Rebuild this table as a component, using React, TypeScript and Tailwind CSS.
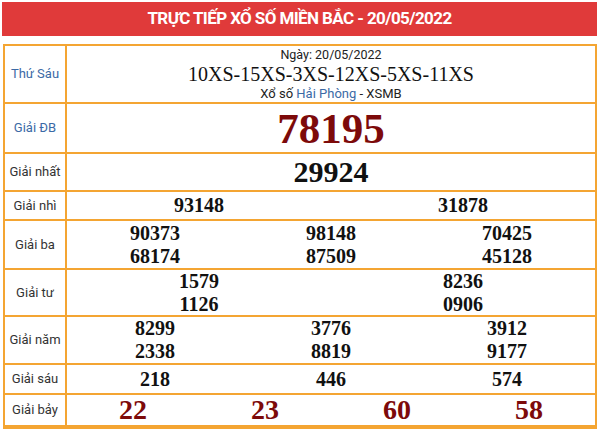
import React from 'react'

type Row = {
  label: string
  labelBlue?: boolean
  height: string
  cols: number
  values: string[][]
  size: string
  red?: boolean
}

const rows: Row[] = [
  { label: 'Giải ĐB', labelBlue: true, height: 'h-[50px]', cols: 1, values: [['78195']], size: 'text-[43px]', red: true },
  { label: 'Giải nhất', height: 'h-[38px]', cols: 1, values: [['29924']], size: 'text-[30px]' },
  { label: 'Giải nhì', height: 'h-[29px]', cols: 2, values: [['93148'], ['31878']], size: 'text-[20px]' },
  { label: 'Giải ba', height: 'h-[49px]', cols: 3, values: [['90373', '68174'], ['98148', '87509'], ['70425', '45128']], size: 'text-[20px]' },
  { label: 'Giải tư', height: 'h-[47px]', cols: 2, values: [['1579', '1126'], ['8236', '0906']], size: 'text-[20px]' },
  { label: 'Giải năm', height: 'h-[48px]', cols: 3, values: [['8299', '2338'], ['3776', '8819'], ['3912', '9177']], size: 'text-[20px]' },
  { label: 'Giải sáu', height: 'h-[30px]', cols: 3, values: [['218'], ['446'], ['574']], size: 'text-[20px]' },
  { label: 'Giải bảy', height: 'h-[32px]', cols: 4, values: [['22'], ['23'], ['60'], ['58']], size: 'text-[28px]', red: true },
]

const gridCols: Record<number, string> = {
  1: 'grid-cols-1',
  2: 'grid-cols-2',
  3: 'grid-cols-3',
  4: 'grid-cols-4',
}

const PrizeRow: React.FC<{ row: Row }> = ({ row }) => {
  return (
    <div className={`flex border-t-2 border-[#f4a532] ${row.height}`}>
      <div
        className={`w-[62px] shrink-0 border-r-2 border-[#f4a532] flex items-center justify-center text-[13px] ${row.labelBlue ? 'text-[#3b6aa6]' : 'text-[#333]'}`}
      >
        {row.label}
      </div>
      <div className={`flex-1 grid ${gridCols[row.cols]} items-center`}>
        {row.values.map((col, i) => (
          <div key={i} className="flex flex-col items-center justify-center">
            {col.map((v) => (
              <span
                key={v}
                className={`font-['Liberation_Serif',serif] font-bold ${row.size} ${row.cols > 1 && !row.red ? 'leading-[23px]' : 'leading-none'} ${row.red ? 'text-[#7d0a0a]' : 'text-[#111]'}`}
              >
                {v}
              </span>
            ))}
          </div>
        ))}
      </div>
    </div>
  )
}

export default function App() {
  return (
    <div className="w-[599px] h-[430px] bg-white px-[2px] pt-[2px] font-['Roboto',sans-serif] overflow-hidden">
      <div className="h-[34px] bg-[#e03a3a] flex items-center justify-center text-white font-bold text-[17px] tracking-[-0.6px]">
        TRỰC TIẾP XỔ SỐ MIỀN BẮC - 20/05/2022
      </div>

      <div className="mt-[8px] ml-[1px] w-[594px] border-2 border-t-0 border-[#f4a532]">
        <div className="flex border-t-2 border-[#f4a532] h-[58px]">
          <div className="w-[62px] shrink-0 border-r-2 border-[#f4a532] flex items-center justify-center text-[13px] text-[#3b6aa6]">
            Thứ Sáu
          </div>
          <div className="flex-1 flex flex-col items-center justify-center">
            <span className="text-[12.5px] leading-[16px] text-[#222]">Ngày: 20/05/2022</span>
            <span className="font-['Liberation_Serif',serif] text-[20px] leading-[23px] text-[#111]">
              10XS-15XS-3XS-12XS-5XS-11XS
            </span>
            <span className="text-[13px] leading-[16px] text-[#222]">
              Xổ số <span className="text-[#3b6aa6]">Hải Phòng</span> - XSMB
            </span>
          </div>
        </div>
        {rows.map((r) => (
          <PrizeRow key={r.label} row={r} />
        ))}
        <div className="border-t-2 border-[#f4a532]" />
      </div>
    </div>
  )
}
